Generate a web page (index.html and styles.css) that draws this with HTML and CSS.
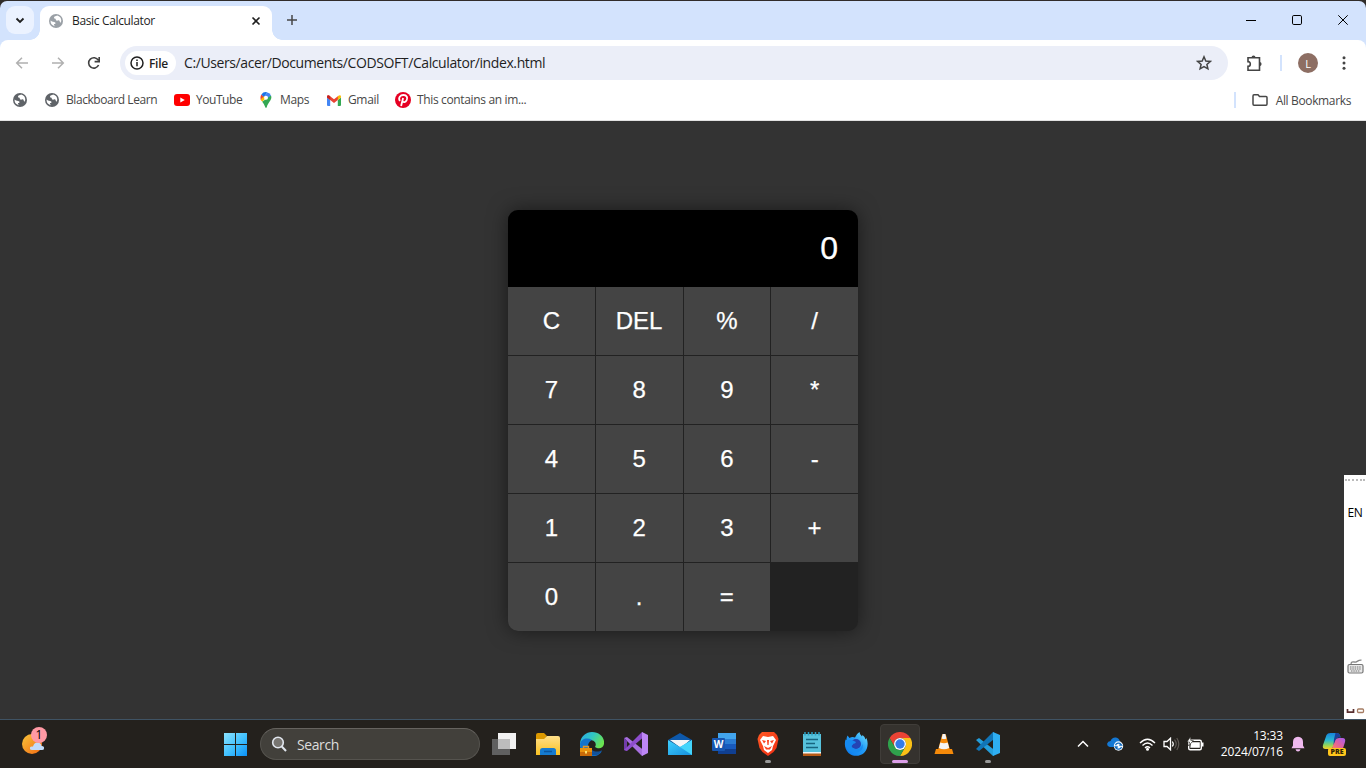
FILE: index.html
```html
<!DOCTYPE html>
<html lang="en">
<head>
<meta charset="utf-8">
<title>Basic Calculator</title>
<link rel="stylesheet" href="styles.css">
</head>
<body>
<svg class="defs" width="0" height="0">
  <defs>
    <symbol id="globe" viewBox="0 0 14 14">
      <circle cx="7" cy="7" r="7" fill="currentColor"/>
      <path d="M1.6 6.6 C2.6 8.2 5.2 7.6 6.2 8.5 C7.1 9.3 6.2 10.1 5.2 10 C4.6 10.7 5.3 11.9 6.3 12.2 C3.4 12 1.4 9.8 1.6 6.6Z" fill="#fff"/>
      <path d="M8.1 1.6 C6.9 2.4 5 2.3 5 3.6 C5 4.7 6 4.4 6.6 4.9 C7.1 5.5 6.5 6.2 7.5 6.6 C8.7 6.8 9.4 6 10.2 6.5 C11 7.2 10.6 8.2 11.5 8.8 L12.3 7.1 C12.4 4.2 10.7 2.1 8.1 1.6Z" fill="#fff"/>
    </symbol>
    <linearGradient id="gWin" x1="0" y1="0" x2="1" y2="1"><stop offset="0" stop-color="#8be3ff"/><stop offset=".55" stop-color="#3ebfff"/><stop offset="1" stop-color="#0a91f8"/></linearGradient>
    <linearGradient id="gSun" x1="0" y1="0" x2="1" y2="1"><stop offset="0" stop-color="#f9c53a"/><stop offset="1" stop-color="#f26a13"/></linearGradient>
    <linearGradient id="gFold" x1="0" y1="0" x2="0" y2="1"><stop offset="0" stop-color="#ffe08a"/><stop offset="1" stop-color="#f9c122"/></linearGradient>
    <linearGradient id="gEdge" x1="0" y1="0" x2="1" y2=".5"><stop offset="0" stop-color="#2ba6e8"/><stop offset=".5" stop-color="#30c6c4"/><stop offset="1" stop-color="#6be350"/></linearGradient>
    <linearGradient id="gMail" x1="0" y1="0" x2="1" y2="1"><stop offset="0" stop-color="#3fd0ff"/><stop offset="1" stop-color="#168fdc"/></linearGradient>
    <linearGradient id="gBrave" x1="0" y1="0" x2="1" y2="1"><stop offset="0" stop-color="#ff5a25"/><stop offset="1" stop-color="#f02c12"/></linearGradient>
    <linearGradient id="gFox" x1="0" y1="1" x2="1" y2="0"><stop offset="0" stop-color="#0877ee"/><stop offset=".55" stop-color="#239df7"/><stop offset="1" stop-color="#77e7ff"/></linearGradient>
    <linearGradient id="gCo1" x1="0" y1="0" x2="0" y2="1"><stop offset="0" stop-color="#1683dc"/><stop offset=".45" stop-color="#29b7d2"/><stop offset=".75" stop-color="#8dd35c"/><stop offset="1" stop-color="#f4cf28"/></linearGradient>
    <linearGradient id="gCo2" x1="1" y1="0" x2="0" y2="1"><stop offset="0" stop-color="#a55cf5"/><stop offset=".5" stop-color="#e2609c"/><stop offset="1" stop-color="#ff8855"/></linearGradient>
  </defs>
</svg>

<div class="desktop">
  <header class="tabstrip">
    <div class="tab-search"><svg width="10" height="7" viewBox="0 0 10 7"><path d="M1.5 1.5 5 5 8.5 1.5" fill="none" stroke="#1f1f1f" stroke-width="1.8"/></svg></div>
    <div class="tab">
      <svg class="tab-globe" width="14" height="14"><use href="#globe"/></svg>
      <span class="tab-title">Basic Calculator</span>
      <svg width="10" height="10" viewBox="0 0 10 10"><path d="M1.5 1.500l7 7M8.500 1.500l-7 7" stroke="#1f1f1f" stroke-width="1.600"/></svg>
    </div>
    <svg class="new-tab" width="12" height="12" viewBox="0 0 12 12"><path d="M6 1v10M1 6h10" stroke="#474747" stroke-width="1.500"/></svg>
    <div class="window-buttons">
      <svg width="10" height="10" viewBox="0 0 10 10"><path d="M0 5.500h10" stroke="#000"/></svg>
      <svg width="10" height="10" viewBox="0 0 10 10"><rect x=".5" y=".5" width="9" height="9" rx="1.300" fill="none" stroke="#000"/></svg>
      <svg width="10" height="10" viewBox="0 0 10 10"><path d="M.3.3l9.400 9.400M9.700.3.3 9.700" stroke="#000"/></svg>
    </div>
  </header>

  <div class="chrome">
    <div class="toolbar">
      <svg class="nav-icon" width="14" height="14" viewBox="0 0 14 14"><path d="M13 7H2M7 1.700 1.700 7 7 12.300" fill="none" stroke="#b0b0b0" stroke-width="1.500"/></svg>
      <svg class="nav-icon" width="14" height="14" viewBox="0 0 14 14"><path d="M1 7h11M7 1.700 12.300 7 7 12.300" fill="none" stroke="#b0b0b0" stroke-width="1.500"/></svg>
      <svg class="nav-icon" width="14" height="14" viewBox="0 0 14 14"><path d="M11.600 9A5.200 5.200 0 1 1 11.300 4.200M12.200 1v4.600H7.600" fill="none" stroke="#404040" stroke-width="1.600"/></svg>
      <div class="omnibox">
        <div class="file-chip">
          <svg width="14" height="14" viewBox="0 0 14 14"><circle cx="7" cy="7" r="6" fill="none" stroke="#1f1f1f" stroke-width="1.500"/><path d="M7 6v4.300M7 3.500v1.600" stroke="#1f1f1f" stroke-width="1.500"/></svg>
          <span>File</span>
        </div>
        <span class="url">C:/Users/acer/Documents/CODSOFT/Calculator/index.html</span>
        <svg class="star" width="16" height="16" viewBox="0 0 16 16"><path d="M8 1.800 9.800 6l4.500.4-3.400 3 1 4.400L8 11.500l-3.900 2.300 1-4.400-3.400-3L6.200 6Z" fill="none" stroke="#444" stroke-width="1.500"/></svg>
      </div>
      <svg class="puzzle" width="17" height="17" viewBox="0 0 17 17"><path d="M2 2.700h11.500v12.500H2v-3.800c1.500 0 2.300-1 2.300-2.400S3.500 6.600 2 6.600Z" fill="none" stroke="#444" stroke-width="1.600"/><path d="M5.500 2.500a2 2 0 0 1 4 0ZM13.500 7a2 2 0 0 1 0 4.200Z" fill="#444"/></svg>
      <span class="divider"></span>
      <span class="avatar">L</span>
      <svg class="kebab" width="4" height="14" viewBox="0 0 4 14"><g fill="#444"><circle cx="2" cy="1.700" r="1.500"/><circle cx="2" cy="7" r="1.500"/><circle cx="2" cy="12.300" r="1.500"/></g></svg>
    </div>
    <nav class="bookmarks">
      <svg class="bm-globe" width="14" height="14"><use href="#globe"/></svg>
      <div class="bookmark bm-blackboard"><svg class="bm-globe" width="14" height="14"><use href="#globe"/></svg><span>Blackboard Learn</span></div>
      <div class="bookmark bm-youtube"><svg width="16" height="12" viewBox="0 0 16 12"><rect width="16" height="12" rx="3" fill="#f00"/><path d="M6.300 3.400v5.200L10.800 6Z" fill="#fff"/></svg><span>YouTube</span></div>
      <div class="bookmark bm-maps"><svg width="12" height="16" viewBox="0 0 12 16"><path d="M1.400 2.600 4 4.800 2 9 .7 7.200A5.600 5.600 0 0 1 1.400 2.600Z" fill="#ea4335"/><path d="M1.400 2.600A5.500 5.500 0 0 1 7.500.4L3.800 4.900Z" fill="#1a73e8"/><path d="M7.500.4A5.500 5.500 0 0 1 11 3.400L7.800 7 4 4.700Z" fill="#4285f4"/><path d="M.7 7.200 2.200 9.800 7.500 4.500 4 4.600Z" fill="#fbbc04"/><path d="M11 3.400C12.700 7.800 8 10 6.800 15Q6 17 5.200 15 4.500 12.500 2.200 9.800Z" fill="#34a853"/><circle cx="6" cy="5.700" r="2" fill="#fff"/></svg><span>Maps</span></div>
      <div class="bookmark bm-gmail"><svg width="14" height="11" viewBox="0 0 14 11"><path d="M0 2.500 3.200 5v6H1Q0 11 0 10Z" fill="#4285f4"/><path d="M14 2.500 10.800 5v6H13q1 0 1-1Z" fill="#34a853"/><path d="M0 2.500V1.600Q.6-.5 2.500.8L7 4.200 11.500.8 10.800 5 7 7.900 3.200 5Z" fill="#ea4335"/><path d="M10.800 5V1.300Q13.600-.8 14 1.600v1Z" fill="#fbbc04"/><path d="M0 1.600Q.5-.5 2.500.8l.7.500V5L0 2.500Z" fill="#c5221f"/></svg><span>Gmail</span></div>
      <div class="bookmark bm-pin"><svg width="16" height="16" viewBox="0 0 16 16"><circle cx="8" cy="8" r="8" fill="#e60023"/><path d="M6.100 14 8.100 6M4.900 9C2.800 5.500 5.500 3 8.400 3c3.600 0 4.400 3 3.300 5.200C10.500 10.700 8.500 10.500 7.600 9.300" fill="none" stroke="#fff" stroke-width="1.800"/></svg><span>This contains an im...</span></div>
      <div class="all-bookmarks"><span class="divider"></span><svg width="16" height="12" viewBox="0 0 16 12"><path d="M1 2Q1 .8 2 .8h4L7.500 2.500H14q1 0 1 1V10q0 1.200-1 1.200H2Q1 11.200 1 10Z" fill="none" stroke="#474747" stroke-width="1.500"/></svg><span class="bm-all">All Bookmarks</span></div>
    </nav>
  </div>

  <main class="page">
    <section class="calculator">
      <div class="display">0</div>
      <div class="buttons">
        <button>C</button><button>DEL</button><button>%</button><button>/</button>
        <button>7</button><button>8</button><button>9</button><button>*</button>
        <button>4</button><button>5</button><button>6</button><button>-</button>
        <button>1</button><button>2</button><button>3</button><button>+</button>
        <button>0</button><button>.</button><button>=</button>
      </div>
    </section>
    <aside class="langbar">
      <span class="grip"></span>
      <span class="lang">EN</span>
      <svg class="keyboard" width="17" height="15" viewBox="0 0 17 15"><path d="M4 5.500C4 1.500 7 3.500 9 3S11 .8 14.500 1.200" fill="none" stroke="#888" stroke-width="1.300"/><rect x="1" y="5.500" width="15" height="8.500" rx="1.500" fill="#e8e8e8" stroke="#777" stroke-width="1.200"/><path d="M3 8h11M3 10h11M4 12h9" stroke="#777" stroke-dasharray="1.500 .8"/></svg>
      <svg class="lang-options" width="19" height="6" viewBox="0 0 19 6"><path d="M1.500 1v3.200h6V1" fill="none" stroke="#5a3030" stroke-width="1.700"/><rect x="11.500" y="1" width="6" height="3.500" rx="1" fill="none" stroke="#a57c63" stroke-width="1.300"/></svg>
    </aside>
  </main>

  <footer class="taskbar">
    <div class="weather">
      <svg width="24" height="22" viewBox="0 0 24 22"><circle cx="10" cy="11" r="10" fill="url(#gSun)"/><path d="M10 17q-2.500 0-2-2.500Q8.500 13 11 13.500 12 9.500 15.500 9.500 19 9.500 19.500 13q3-.2 2.500 2.500Q22 17 20 17Z" fill="#c3dcfa"/></svg>
      <span class="count">1</span>
    </div>
    <div class="apps">
      <div class="app start"><svg width="23" height="23" viewBox="0 0 23 23"><path d="M0 0h11v11H0ZM12 0h11v11H12ZM0 12h11v11H0ZM12 12h11v11H12Z" fill="url(#gWin)"/></svg></div>
      <div class="search"><svg width="16" height="16" viewBox="0 0 16 16"><circle cx="7" cy="6.500" r="5.300" fill="#777571" stroke="#e1e6ee" stroke-width="1.600"/><path d="M10.800 10.500 15 15" stroke="#e1e6ee" stroke-width="2"/></svg><span>Search</span></div>
      <div class="app"><svg width="24" height="24" viewBox="0 0 24 24"><path d="M6 1h18v16H6Z" fill="#f2f2f2"/><path d="M0 7h18v16H0Z" fill="#606060"/><path d="M6 7h12v10H6Z" fill="#bdbdbd"/></svg></div>
      <div class="app"><svg width="24" height="24" viewBox="0 0 24 24"><path d="M0 3q0-2 2-2h6l3 3-3 4H0Z" fill="#dc9900"/><path d="M0 7h8l3-3h11q2 0 2 2v17H0Z" fill="url(#gFold)"/><path d="M4 23v-4.500Q4 16 6.500 16h11q2.500 0 2.500 2.500V23Z" fill="#157bd0"/><path d="M8 19.500h8" stroke="#0b559e" stroke-width="1.500"/></svg></div>
      <div class="app"><svg width="24" height="24" viewBox="0 0 24 24"><path d="M0 11C1 4 6 0 12 0c8 0 13 6 12 12-1 5-6 5-9 3 2-3 0-7-5-7C5 8 1 12 0 17Z" fill="url(#gEdge)"/><path d="M0 12C1 7 7 5 12 8c-4 2-6 7-1 12 4 3 8 1 11-1-4 7-13 6-17 3-3-2-5-6-5-10Z" fill="#1474cc"/><path d="M12 18c3 2 7 2 10 0-2 5-7 6-10 5Z" fill="#12529b"/><rect x="0" y="16" width="12" height="8" fill="#ca6b08"/><path d="M3.500 16v-1.500h5V16" fill="none" stroke="#e79622" stroke-width="1.400"/><path d="M0 16h12v4H0Z" fill="#ea930d"/><path d="M5 19h2v2.500H5Z" fill="#ffe16a"/></svg></div>
      <div class="app"><svg width="24" height="24" viewBox="0 0 24 24"><path d="M0 6 3 5 22 20 18 24Z" fill="#a870df"/><path d="M0 6v12l3 1V8.500Z" fill="#713ca9"/><path d="M0 18 18 0l3 4L3 19Z" fill="#8d4dcc"/><path d="M18 0 24 3v18l-6 3Z" fill="#bd86f5"/></svg></div>
      <div class="app"><svg width="24" height="24" viewBox="0 0 24 24"><path d="M0 8 12 1l12 7-12 7Z" fill="#0d58aa"/><path d="M2 8h20l-9 8Z" fill="#f4f5f7"/><path d="M0 8l12 7 12-7v15H0Z" fill="url(#gMail)"/><path d="M12 15 24 8v15Z" fill="#44d5fc"/></svg></div>
      <div class="app"><svg width="24" height="24" viewBox="0 0 24 24"><path d="M6 1h18v6H6Z" fill="#42a5ee"/><path d="M6 7h18v5H6Z" fill="#2b7cd3"/><path d="M6 12h18v5H6Z" fill="#185abd"/><path d="M6 17h18v5H6Z" fill="#103f91"/><rect y="6" width="13" height="13" rx="1" fill="#1756b1"/><text class="word-letter" x="6.500" y="16" text-anchor="middle">W</text></svg></div>
      <div class="app running"><svg width="24" height="24" viewBox="0 0 24 24"><path d="M6 0h12l3 3 1.500 4-2 9-3 4-5.500 4-5.500-4-3-4-2-9L3 3Z" fill="url(#gBrave)"/><path d="m7 4 5 1 5-1 3 4-3 6-1 4-4 3-4-3-1-4-3-6Z" fill="#fff"/><path d="m6 8 4 1-2 2.500ZM18 8l-4 1 2 2.500ZM11 8h2l-.4 5h-1.200ZM8 14l4 2 4-2-2 3.500h-4Z" fill="#fb4420"/></svg></div>
      <div class="app"><svg width="24" height="24" viewBox="0 0 24 24"><path d="M3 21h18v3H3Z" fill="#b85b17"/><path d="M3 2h18v18H3Z" fill="#57c2dc"/><path d="M3 20h18v1.500H3Z" fill="#ecf5f8"/><path d="M5 0v3.500M8.500 0v3.500M12 0v3.500M15.500 0v3.500M19 0v3.500" stroke="#2d9fc1" stroke-width="1.500"/><path d="M6 7.500h12M6 11.500h9M6 15.500h12" stroke="#176580" stroke-width="1.700"/></svg></div>
      <div class="app"><svg width="24" height="24" viewBox="0 0 24 24"><path d="M3.500 3.500 5.500 6Q8 4.500 11 5.500q1-3.500 4.500-5.500 0 2.500 2.500 4.500L18.500 3q2.500 1.500 3 4.500L22.500 6c2 5 1.500 11-2.500 15-4 3.500-11 4-15.500 0C.5 17 .3 12 1.500 7.500L2.500 8Q2.500 5.500 3.500 3.500Z" fill="url(#gFox)"/><circle cx="12" cy="12" r="5" fill="#2444b4"/><path d="M2 9c4-2 7-.5 10 1l-1 1.500c-2.500 0-2 2-4 3 3 4 10 4 11.500-2.500C20 18 15.500 21 10 20.500 4 19.500 0 14 2 9Z" fill="#168af0"/></svg></div>
      <div class="app active"><svg width="24" height="24" viewBox="0 0 24 24"><path d="M1.600 6A12 12 0 0 1 22.400 6H12a6 6 0 0 0-5.200 9Z" fill="#ea4335"/><path d="M22.400 6A12 12 0 0 1 12 24l5.200-9A6 6 0 0 0 12 6Z" fill="#fbc116"/><path d="M12 24A12 12 0 0 1 1.600 6l5.200 9a6 6 0 0 0 10.400 0Z" fill="#2fa24c"/><circle cx="12" cy="12" r="6" fill="#fff"/><circle cx="12" cy="12" r="4.700" fill="#347be9"/></svg></div>
      <div class="app"><svg width="24" height="24" viewBox="0 0 24 24"><path d="m4 17-1.500 5h19L20 17Z" fill="#f58a0a"/><path d="M11 2h2q.8 0 1 1l4 15q-6 3-12 0l4-15q.2-1 1-1Z" fill="#f58a0a"/><path d="M10.700 2h2.600L14.400 6.500q-2.400 1.200-4.800 0ZM8.300 10.500q3.700 1.600 7.400 0L17.200 16q-5.200 2.500-10.400 0Z" fill="#f5f5f5"/></svg></div>
      <div class="app running"><svg width="24" height="24" viewBox="0 0 24 24"><path d="M0 8 3 6 21 20l-4 4Z" fill="#249edb"/><path d="M0 17 17 0l5 4L3 19Z" fill="#1175b7"/><path d="m17 0 7 3v18l-7 3Z" fill="#2eaef2"/></svg></div>
    </div>
    <div class="tray">
      <svg class="chevron" width="12" height="8" viewBox="0 0 12 8"><path d="m1 6.500 5-5 5 5" fill="none" stroke="#fff" stroke-width="1.500"/></svg>
      <svg class="onedrive" width="17" height="14" viewBox="0 0 17 14"><path d="M2.800 10Q-.3 9 .2 6.500.8 4 3.500 4 5 0 9 .5q3 .4 4 4l-2 5.500Z" fill="#1478d4"/><circle cx="11.500" cy="9" r="4.700" fill="#f4faff"/><path d="M8.500 8.200A3.200 3.200 0 0 1 14 7.300l.6.900h-2.400M14.500 10A3.200 3.200 0 0 1 9 11l-.6-1h2.400" fill="none" stroke="#126bc0" stroke-width="1.300"/></svg>
      <svg class="wifi" width="17" height="13" viewBox="0 0 17 13"><path d="M1 5Q8.500-2.500 16 5M3.500 7.500q5-5 10 0M6 10q2.500-2.500 5 0" fill="none" stroke="#fff" stroke-width="1.400"/><circle cx="8.500" cy="11.300" r="1.500" fill="#fff"/></svg>
      <svg class="volume" width="17" height="14" viewBox="0 0 17 14"><path d="M1 4.500h3L7.500 1.200v11.600L4 9.500H1Z" fill="none" stroke="#fff" stroke-width="1.300"/><path d="M9.300 4.500q2 2.500 0 5" fill="none" stroke="#fff" stroke-width="1.200"/><path d="M11.500 2.700q3.500 4.300 0 8.600M13.800 1q4 6 0 12" fill="none" stroke="#5e5954" stroke-width="1.200"/></svg>
      <svg class="battery" width="17" height="14" viewBox="0 0 17 14"><rect x="1.700" y="3.200" width="12.600" height="9.600" rx="1.500" fill="none" stroke="#fff" stroke-width="1.400"/><path d="M4 5.200h8.800v5.600H3.300ZM15 5.500h1.500v4H15Z" fill="#fff"/><path d="M3.500-.3 0 5h2.500L1.500 9 6.300 3.500H3.800Z" fill="#fff" stroke="#24211d" stroke-width=".6"/></svg>
      <div class="clock"><span>13:33</span><span>2024/07/16</span></div>
      <svg class="bell" width="14" height="16" viewBox="0 0 14 16"><path d="M.5 12.300 2 9.500V6Q2 1 7 .8 12 1 12 6v3.500l1.500 2.800Z" fill="#efb9ee"/><path d="M4.500 13.300h5Q9 15.500 7 15.500t-2.500-2.200Z" fill="#efb9ee"/></svg>
      <div class="copilot">
        <svg width="24" height="24" viewBox="0 0 24 24"><path d="M1 13 4.500 3Q5.500 1 8.500 1H15q2.500 0 3 2.500l.5 2Q15 4 13.500 8L11 15q-.8 2-3 2H3.500Q0 17 1 13Z" fill="url(#gCo1)"/><path d="M10.500 15 13 8q1.500-2 4-2h3.500Q24 6 23 10l-2.500 8H9.500Z" fill="url(#gCo2)"/><path d="M13.500 1H15q2.500 0 3 2.500l.5 2Q15 4.500 13.500 8l-2 5q0-6 2-12Z" fill="#1b3f9a"/></svg>
        <span class="preview">PRE</span>
      </div>
    </div>
  </footer>
</div>
</body>
</html>
```

FILE: styles.css
```css
* { box-sizing: border-box; }
body { margin: 0; overflow: hidden; background: #333; font-family: "Open Sans", "Noto Sans", sans-serif; font-size: 12px; }
svg { display: block; flex: none; }
.defs { position: absolute; }
.desktop { display: flex; flex-direction: column; width: 1366px; height: 768px; background: #302c2a; }

.tabstrip { display: flex; align-items: flex-start; height: 49px; flex: none; margin-top: 1px; margin-bottom: -10px; padding: 5px 0 0 6px; background: #d3e3fd; border-radius: 7px 7px 0 0; }
.tab-search { display: flex; align-items: center; justify-content: center; width: 28px; height: 28px; background: #ebf2ff; border-radius: 9px; }
.tab { position: relative; display: flex; align-items: center; width: 232px; height: 34px; margin-left: 6px; padding: 0 11px 5px 9px; background: #fff; border-radius: 9px 9px 0 0; color: #1f1f1f; }
.tab::before, .tab::after { content: ""; position: absolute; bottom: 0; width: 10px; height: 10px; }
.tab::before { right: 100%; background: radial-gradient(circle at 0 0, transparent 9.5px, #fff 10px); }
.tab::after { left: 100%; background: radial-gradient(circle at 100% 0, transparent 9.5px, #fff 10px); }
.tab-globe { color: #9aa0a6; }
.tab-title { flex: 1; margin-left: 9px; white-space: nowrap; letter-spacing: -.35px; }
.new-tab { margin: 8px 0 0 14px; }
.window-buttons { display: flex; gap: 36px; margin: 9px 18px 0 auto; }

.chrome { position: relative; height: 81px; flex: none; background: #fff; border-radius: 8px 8px 0 0; border-bottom: 1px solid #e2e2e2; }
.toolbar { display: flex; align-items: center; height: 46px; padding: 0 20px 0 15px; }
.nav-icon { margin-right: 22px; }
.omnibox { display: flex; align-items: center; width: 1108px; height: 34px; margin-left: -3px; padding: 0 16px 0 5px; border-radius: 17px; background: #ebeef8; }
.file-chip { display: flex; align-items: center; gap: 5px; width: 51px; height: 24px; padding-left: 5px; border-radius: 12px; background: #fff; color: #1f1f1f; font-weight: 600; letter-spacing: -.3px; }
.url { margin-left: 8px; color: #1f1f1f; font-size: 14px; line-height: 18px; padding-bottom: 1px; letter-spacing: -.4px; white-space: nowrap; }
.star { margin-left: auto; }
.puzzle { margin-left: 18px; }
.divider { width: 2px; height: 16px; background: #d3e3fd; }
.puzzle + .divider { margin-left: 17px; }
.avatar { display: flex; align-items: center; justify-content: center; width: 20px; height: 20px; margin-left: 16px; border-radius: 50%; background: #8d6e63; color: #fff; font-size: 11px; }
.kebab { margin-left: 24px; }
.bookmarks { display: flex; align-items: center; height: 28px; padding: 0 15px 0 13px; color: #474747; }
.bm-globe { color: #5f6368; }
.bookmark { display: flex; align-items: center; gap: 6px; white-space: nowrap; }
.bookmark span { position: relative; top: -.5px; letter-spacing: -.35px; }
.bm-all { letter-spacing: -.36px; }
.bm-blackboard { width: 129px; margin-left: 18px; gap: 7px; }
.bookmark.bm-blackboard span { letter-spacing: -.43px; }
.bm-youtube { width: 86px; }
.bookmark.bm-youtube span { letter-spacing: -.45px; }
.bm-maps { width: 67px; gap: 8px; }
.bm-gmail { width: 68px; gap: 7px; }
.all-bookmarks { display: flex; align-items: center; margin-left: auto; white-space: nowrap; }
.all-bookmarks svg { margin: 0 8px 0 16px; }

.page { position: relative; display: flex; flex: 1; align-items: center; justify-content: center; background: #333; }
.calculator { width: 350px; overflow: hidden; border-radius: 10px; background: #222; box-shadow: 0 0 20px rgba(0, 0, 0, .5); font-family: "Liberation Sans", Arial, sans-serif; color: #fff; -webkit-text-stroke: .25px #fff; }
.display { height: 77px; padding: 20px; background: #000; font-size: 32px; line-height: 37px; text-align: right; }
.buttons { display: grid; grid-template-columns: repeat(4, 1fr); grid-auto-rows: 68px; gap: 1px; }
.buttons button { padding: 0; border: 0; background: #444; color: #fff; font: 24px "Liberation Sans", Arial, sans-serif; -webkit-text-stroke: .25px #fff; }
.langbar { position: absolute; right: 0; bottom: 0; width: 22px; height: 245px; display: flex; flex-direction: column; align-items: center; background: #fff; color: #000; overflow: hidden; }
.grip { width: 20px; height: 0; margin-top: 4px; border-top: 2px dotted #bbb; }
.lang { margin-top: 23px; line-height: 17px; letter-spacing: -.3px; }
.keyboard { margin-top: 138px; }
.lang-options { margin-top: 34px; }

.taskbar { display: flex; align-items: center; height: 48px; flex: none; background: #24211d; color: #fff; box-shadow: 0 -1px 0 #3f5364; z-index: 1; }
.weather { position: relative; width: 213px; padding-left: 22px; }
.count { position: absolute; left: 31px; top: -6px; width: 16px; height: 16px; border-radius: 50%; background: #ff99a4; color: #000; line-height: 16px; text-align: center; }
.apps { display: flex; align-items: center; }
.app { position: relative; display: flex; align-items: center; justify-content: center; width: 44px; height: 40px; }
.search { display: flex; align-items: center; gap: 10px; width: 220px; height: 32px; margin: 0 2px 0 3px; padding-left: 10px; border: 1px solid #55534e; border-top-color: #66635f; border-radius: 16px; background: #42403b; color: #ddd; font-size: 14px; letter-spacing: -.4px; }
.word-letter { fill: #fff; font: bold 10px "Open Sans", sans-serif; }
.running::after, .active::after { content: ""; position: absolute; bottom: 1px; width: 6px; height: 3px; border-radius: 2px; background: #999; }
.active::before { content: ""; position: absolute; inset: 0 2px; border: 1px solid #403d39; border-radius: 4px; background: #35322e; }
.active svg { position: relative; }
.active::after { width: 16px; background: #dc9ee8; }
.tray { display: flex; align-items: center; margin-left: auto; padding-right: 20px; }
.chevron { margin-right: 1px; }
.onedrive { margin-left: 17px; }
.wifi { margin-left: 15px; }
.volume { margin-left: 7px; }
.battery { margin-left: 7px; }
.clock { display: flex; flex-direction: column; align-items: flex-end; width: 79px; line-height: 16px; letter-spacing: -.15px; }
.bell { margin-left: 8px; }
.copilot { position: relative; margin-left: 17px; }
.preview { position: absolute; left: 6px; bottom: 0; width: 18px; height: 8px; border-radius: 2px; background: #ffc61c; color: #302304; font-size: 7px; font-weight: 800; line-height: 8px; text-align: center; }
```
